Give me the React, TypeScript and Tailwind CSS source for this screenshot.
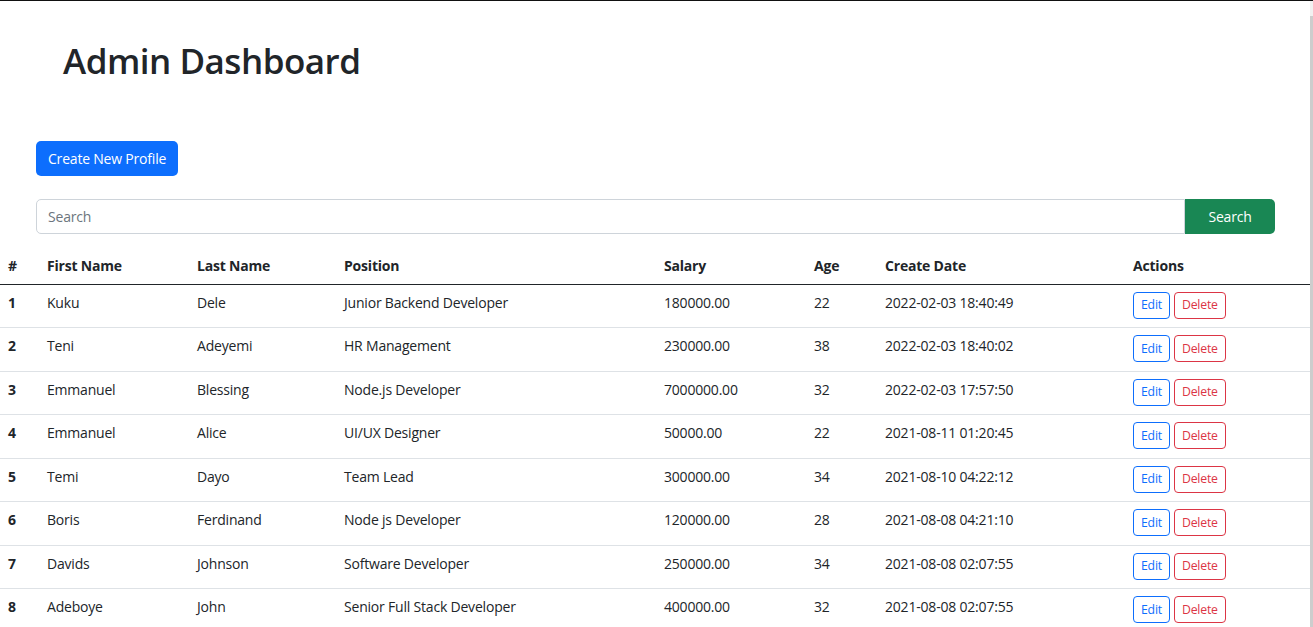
import React from "react";

const rows = [
  ["1", "Kuku", "Dele", "Junior Backend Developer", "180000.00", "22", "2022-02-03 18:40:49"],
  ["2", "Teni", "Adeyemi", "HR Management", "230000.00", "38", "2022-02-03 18:40:02"],
  ["3", "Emmanuel", "Blessing", "Node.js Developer", "7000000.00", "32", "2022-02-03 17:57:50"],
  ["4", "Emmanuel", "Alice", "UI/UX Designer", "50000.00", "22", "2021-08-11 01:20:45"],
  ["5", "Temi", "Dayo", "Team Lead", "300000.00", "34", "2021-08-10 04:22:12"],
  ["6", "Boris", "Ferdinand", "Node js Developer", "120000.00", "28", "2021-08-08 04:21:10"],
  ["7", "Davids", "Johnson", "Software Developer", "250000.00", "34", "2021-08-08 02:07:55"],
  ["8", "Adeboye", "John", "Senior Full Stack Developer", "400000.00", "32", "2021-08-08 02:07:55"],
];

const headers = ["#", "First Name", "Last Name", "Position", "Salary", "Age", "Create Date", "Actions"];
const widths = [39, 150, 147, 320, 150, 71, 248, 185];

export default function App() {
  return (
    <div
      className="w-[1313px] h-[627px] overflow-hidden bg-white text-[#212529] text-[14px] leading-[21px] tracking-[-0.2px] border-t border-[#111]"
      style={{ fontFamily: '"Open Sans", "Noto Sans", sans-serif' }}
    >
      <div className="flex">
        <div className="flex-1 min-w-0">
          <h1 className="pl-[63px] pt-[38px] text-[35px] leading-[43px] font-semibold tracking-[-0.5px]">
            Admin Dashboard
          </h1>

          <div className="pl-[36px] mt-[59px]">
            <button className="h-[35px] px-[12px] rounded-[5px] bg-[#0d6efd] text-white text-[14px]">
              Create New Profile
            </button>
          </div>

          <div className="pl-[36px] pr-[35px] mt-[23px] flex">
            <div className="flex-1 h-[35px] border border-[#ced4da] rounded-l-[5px] flex items-center px-[11px] text-[#6c757d]">
              Search
            </div>
            <button className="w-[90px] h-[35px] bg-[#198754] text-white rounded-r-[5px]">Search</button>
          </div>

          <table className="mt-[15px] border-collapse table-fixed w-[1310px]">
            <colgroup>
              {widths.map((w, i) => (
                <col key={i} style={{ width: w }} />
              ))}
            </colgroup>
            <thead>
              <tr className="h-[35px] border-b border-[#212529]">
                {headers.map((h) => (
                  <th key={h} className="text-left font-bold px-[8px] pt-[6px] pb-[7px] align-top">
                    {h}
                  </th>
                ))}
              </tr>
            </thead>
            <tbody>
              {rows.map((r) => (
                <tr key={r[0]} className="h-[43.5px] border-b border-[#dee2e6]">
                  {r.map((c, i) => (
                    <td key={i} className={`px-[8px] py-[7px] align-top ${i === 0 ? "font-bold" : ""}`}>
                      {c}
                    </td>
                  ))}
                  <td className="px-[8px] pt-[7px] align-top">
                    <div className="flex gap-[4px]">
                      <button className="h-[27px] px-[7px] border border-[#0d6efd] text-[#0d6efd] rounded-[4px] text-[12.25px] leading-[18px]">
                        Edit
                      </button>
                      <button className="h-[27px] px-[7px] border border-[#dc3545] text-[#dc3545] rounded-[4px] text-[12.25px] leading-[18px]">
                        Delete
                      </button>
                    </div>
                  </td>
                </tr>
              ))}
            </tbody>
          </table>
        </div>
        <div className="w-[3px] flex flex-col shrink-0">
          <div className="h-[15px] bg-[#f1f1f1]" />
          <div className="h-[620px] bg-[#cdcdcd]" />
        </div>
      </div>
    </div>
  );
}
